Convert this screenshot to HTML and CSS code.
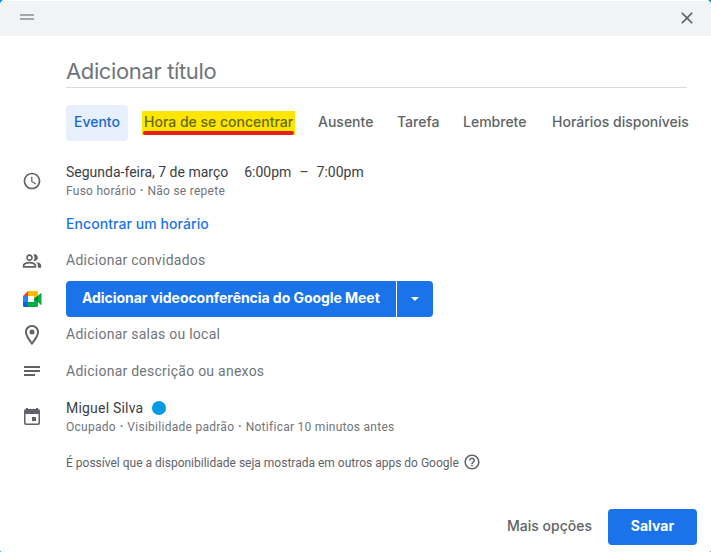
FILE: index.html
```html
<!DOCTYPE html>
<html lang="pt-BR">
<head>
<meta charset="utf-8">
<title>Novo evento</title>
<link rel="stylesheet" href="styles.css">
</head>
<body>
<main class="dialog">
  <header class="bar">
    <span class="grip"></span>
    <svg class="close" viewBox="0 0 24 24" width="20" height="20"><path d="M19 6.41 17.59 5 12 10.59 6.41 5 5 6.41 10.59 12 5 17.59 6.41 19 12 13.41 17.59 19 19 17.59 13.41 12z"/></svg>
  </header>
  <div class="title"><span>Adicionar título</span></div>
  <nav class="tabs">
    <span class="tab active">Evento</span>
    <span class="tab focus"><mark>Hora de se concentrar</mark></span>
    <span class="tab away">Ausente</span>
    <span class="tab task">Tarefa</span>
    <span class="tab remind">Lembrete</span>
    <span class="tab slots">Horários disponíveis</span>
  </nav>
  <section class="row when">
    <svg class="icon" viewBox="0 0 24 24" width="20" height="20"><path d="M11.99 2C6.47 2 2 6.48 2 12s4.47 10 9.99 10C17.52 22 22 17.52 22 12S17.52 2 11.99 2zM12 20c-4.42 0-8-3.58-8-8s3.58-8 8-8 8 3.58 8 8-3.58 8-8 8zm.5-13H11v6l5.25 3.15.75-1.23-4.5-2.67z"/></svg>
    <div>
      <p class="main times"><span class="date">Segunda-feira, 7 de março</span><span>6:00pm</span><span>–</span><span>7:00pm</span></p>
      <p class="sub">Fuso horário<b> · </b>Não se repete</p>
    </div>
  </section>
  <div class="find"><span>Encontrar um horário</span></div>
  <section class="row guests">
    <svg class="icon" viewBox="0 0 24 24" width="20" height="20"><path d="M15 8c0-1.42-.5-2.73-1.33-3.76.42-.14.86-.24 1.33-.24 2.21 0 4 1.79 4 4s-1.79 4-4 4c-.43 0-.84-.09-1.23-.21-.03-.01-.06-.02-.1-.03A5.98 5.98 0 0 0 15 8zm1.66 5.13C18.03 14.06 19 15.32 19 17v3h4v-3c0-2.18-3.58-3.47-6.34-3.87zM9 6c-1.1 0-2 .9-2 2s.9 2 2 2 2-.9 2-2-.9-2-2-2m0-2c2.21 0 4 1.79 4 4s-1.79 4-4 4-4-1.79-4-4 1.79-4 4-4zm0 11c-2.7 0-5.8 1.29-6 2.01V18h12v-1c-.2-.71-3.3-2-6-2m0-2c2.67 0 8 1.34 8 4v3H1v-3c0-2.66 5.33-4 8-4z"/></svg>
    <p class="hint">Adicionar convidados</p>
  </section>
  <section class="row meet">
    <svg class="icon" viewBox="0 0 19 16" width="19" height="16"><path fill="#ea4335" d="M0 5 5 0v5z"/><path fill="#ffba00" d="M5 0h8.5A1.5 1.5 0 0 1 15 1.5V6l-4 3V5H5z"/><path fill="#2684fc" d="M0 5h5v6H0z"/><path fill="#0066da" d="M0 11h5v5H1.5A1.5 1.5 0 0 1 0 14.5z"/><path fill="#00ac47" d="M5 11h6V8l7-6q.5-.2.5.5v11q0 .7-.5.5L15 11v3.5a1.500 1.500 0 0 1-1.500 1.500H5z"/><path fill="#00832d" d="m11 8 4-3.200v6.400z"/></svg>
    <div class="split"><span class="call">Adicionar videoconferência do Google Meet</span><span class="more"><i></i></span></div>
  </section>
  <section class="row place">
    <svg class="icon" viewBox="0 0 24 24" width="24" height="24"><path d="M12 2C8.130 2 5 5.130 5 9c0 5.250 7 13 7 13s7-7.750 7-13c0-3.870-3.130-7-7-7zM7 9c0-2.760 2.240-5 5-5s5 2.240 5 5c0 2.880-2.880 7.190-5 9.880C9.920 16.210 7 11.850 7 9z"/><circle cx="12" cy="9" r="2.500"/></svg>
    <p class="hint">Adicionar salas ou local</p>
  </section>
  <section class="row desc">
    <svg class="icon" viewBox="0 0 16 10" width="16" height="10"><path d="M0 0h16v2H0zM0 4h16v2H0zM0 8h11v2H0z"/></svg>
    <p class="hint">Adicionar descrição ou anexos</p>
  </section>
  <section class="row owner">
    <svg class="icon" viewBox="0 0 16 18" width="16" height="18"><path fill-rule="evenodd" d="M2 1V0h2v1h8V0h2v1a2 2 0 0 1 2 2v12a2 2 0 0 1-2 2H2a2 2 0 0 1-2-2V3a2 2 0 0 1 2-2zm-.5 5v8.500q0 1 1 1h11q1 0 1-1V6zM8 9h4v4H8z"/></svg>
    <div>
      <p class="main person"><span>Miguel Silva</span><i class="dot"></i></p>
      <p class="sub">Ocupado<b> · </b>Visibilidade padrão<b> · </b>Notificar 10 minutos antes</p>
    </div>
  </section>
  <p class="note"><span>É possível que a disponibilidade seja mostrada em outros apps do Google</span>
    <svg viewBox="0 0 24 24" width="18" height="18"><path d="M11 18h2v-2h-2v2zm1-16C6.480 2 2 6.480 2 12s4.480 10 10 10 10-4.480 10-10S17.520 2 12 2zm0 18c-4.410 0-8-3.590-8-8s3.590-8 8-8 8 3.590 8 8-3.590 8-8 8zm0-14c-2.210 0-4 1.790-4 4h2c0-1.100.9-2 2-2s2 .9 2 2c0 2-3 1.750-3 5h2c0-2.250 3-2.500 3-5 0-2.210-1.790-4-4-4z"/></svg>
  </p>
  <footer class="actions"><span class="options">Mais opções</span><span class="save">Salvar</span></footer>
</main>
</body>
</html>
```
FILE: styles.css
```css
* { box-sizing: border-box; }
body { margin: 0; background: #039be5; font-family: Roboto, sans-serif; color: #3c4043; }
p { margin: 0; white-space: nowrap; }
svg { display: block; fill: #5f6368; }
.dialog { width: 711px; height: 552px; background: #fff; border-radius: 5px 5px 2px 2px; overflow: hidden; display: flex; flex-direction: column; }
.bar { height: 36px; border-top: 1px solid #fff; background: #f1f3f4; display: flex; justify-content: space-between; align-items: center; padding: 0 14px 0 20px; flex: none; }
.close { margin-top: -2px; }
.grip { width: 14px; height: 6px; border: solid #a3a6aa; border-width: 2px 0; margin-top: -3px; }
.title, .tabs, .find, .call, .actions { font-family: Inter, sans-serif; white-space: nowrap; }
.title { height: 52px; margin: 0 24px 0 66px; border-bottom: 1px solid #dadce0; font-size: 22px; line-height: 70px; color: #70757a; letter-spacing: -.37px; }
.tabs { display: flex; height: 36px; margin: 17px 0 0 66px; font-size: 14px; font-weight: 500; line-height: 34px; color: #5f6368; }
.tab { flex: none; }
.active { width: 62px; padding-left: 8px; border-radius: 4px; background: #e8f0fe; color: #1967d2; }
.focus { width: 176px; padding: 6px 0 0 14px; color: #666b15; }
mark { display: block; width: 153px; height: 24px; padding-left: 2px; line-height: 22px; color: inherit; background: #ffe600; position: relative; }
mark::after { content: ""; position: absolute; left: 1px; bottom: 0; width: 151px; height: 4px; border-radius: 2px; background: #e8201c; }
.away { width: 93px; padding-left: 14px; }
.task { width: 66px; }
.remind { width: 89px; }
.row { display: grid; grid-template-columns: 66px 1fr; align-items: center; flex: none; }
.icon { justify-self: center; margin-right: 2px; }
.when { height: 40px; margin-top: 20px; }
.main { font-size: 14px; line-height: 20px; letter-spacing: .2px; }
.sub { font-size: 12px; line-height: 18px; letter-spacing: .27px; color: #70757a; }
.sub b { padding: 0 .5px; }
.times { display: flex; gap: 8px; letter-spacing: 0; }
.date { margin-right: 8px; }
.find { height: 24px; margin: 11px 0 0 66px; line-height: 24px; font-size: 14px; font-weight: 500; letter-spacing: .07px; color: #1a73e8; }
.guests { height: 38px; margin-top: 5px; }
.guests .icon { margin-top: 2px; }
.hint { font-size: 14px; line-height: 20px; letter-spacing: .25px; color: #70757a; }
.meet { height: 36px; margin-top: 2px; }
.meet .icon { margin-right: 1px; }
.split { display: flex; gap: 1px; height: 36px; }
.call { width: 330px; padding-left: 16px; border-radius: 4px 0 0 4px; background: #1a73e8; color: #fff; font-size: 14px; font-weight: 700; line-height: 34px; letter-spacing: -.05px; }
.more { width: 36px; border-radius: 0 4px 4px 0; background: #1a73e8; display: grid; place-items: center; }
.more i { border: solid transparent; border-width: 4px 4px 0; border-top-color: #fff; }
.place { height: 35px; }
.place .icon { margin-top: 1px; }
.place .hint { margin-top: -1px; }
.desc { height: 38px; }
.owner { height: 42px; margin-top: 6px; }
.person { display: flex; align-items: center; gap: 9px; }
.dot { width: 14px; height: 14px; border-radius: 50%; background: #039be5; }
.note { display: flex; align-items: center; gap: 4px; height: 20px; margin: 14px 0 0 66px; font-size: 12px; color: #5f6368; }
.note span { margin-top: 2px; }
.actions { display: flex; align-items: center; justify-content: flex-end; gap: 16px; height: 36px; margin: 37px 14px 0 0; font-size: 14px; font-weight: 500; color: #5f6368; }
.options { margin-top: -3px; }
.save { width: 89px; height: 36px; border-radius: 4px; background: #1a73e8; color: #fff; font-weight: 700; line-height: 34px; text-align: center; }
```
